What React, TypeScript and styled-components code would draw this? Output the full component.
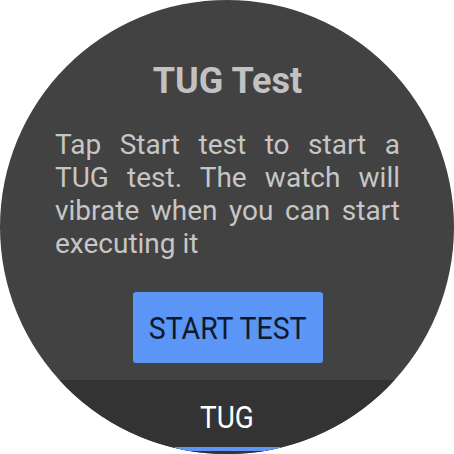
import React from "react";
import styled, { createGlobalStyle } from "styled-components";

const Global = createGlobalStyle`
  html, body { margin: 0; padding: 0; background: #ffffff; }
  body { width: 454px; height: 454px; overflow: hidden; font-family: Roboto, "Noto Sans", sans-serif; }
`;

const Watch = styled.div`
  width: 454px;
  height: 454px;
  border-radius: 50%;
  overflow: hidden;
  background: #424242;
  display: flex;
  flex-direction: column;
`;

const Content = styled.main`
  flex: 1;
  display: flex;
  flex-direction: column;
  align-items: center;
  padding: 60px 54px 0 55px;
`;

const Title = styled.h1`
  margin: 0;
  font-size: 36px;
  line-height: 42px;
  font-weight: 700;
  color: #c2c2c2;
`;

const Body = styled.p`
  margin: 26px 0 0;
  align-self: stretch;
  font-size: 28px;
  line-height: 33px;
  color: #c6c6c6;
  text-align: justify;
`;

const StartButton = styled.button`
  margin-top: 32px;
  width: 190px;
  height: 71px;
  border: none;
  border-radius: 3px;
  background: #5b95f5;
  color: #0e1a2c;
  font-family: Roboto, sans-serif;
  font-size: 32px;
  padding: 0;
  display: flex;
  align-items: center;
  justify-content: center;
`;

const Condensed = styled.span<{ $scale: number }>`
  display: inline-block;
  transform: scaleX(${(p) => p.$scale});
`;

const TabBar = styled.nav`
  height: 74px;
  flex-shrink: 0;
  background: #333333;
  display: flex;
  flex-direction: column;
  align-items: center;
`;

const TabLabel = styled.span`
  margin-top: 20px;
  font-size: 31px;
  line-height: 36px;
  color: #ffffff;
`;

const Indicator = styled.div`
  margin-top: 11px;
  width: 105px;
  height: 4px;
  background: #5b95f5;
`;

export default function App() {
  return (
    <>
      <Global />
      <Watch>
        <Content>
          <Title>TUG Test</Title>
          <Body>
            Tap Start test to start a TUG test. The watch will vibrate when you can start executing it
          </Body>
          <StartButton>
            <Condensed $scale={0.89}>START TEST</Condensed>
          </StartButton>
        </Content>
        <TabBar>
          <TabLabel>
            <Condensed $scale={0.9}>TUG</Condensed>
          </TabLabel>
          <Indicator />
        </TabBar>
      </Watch>
    </>
  );
}
